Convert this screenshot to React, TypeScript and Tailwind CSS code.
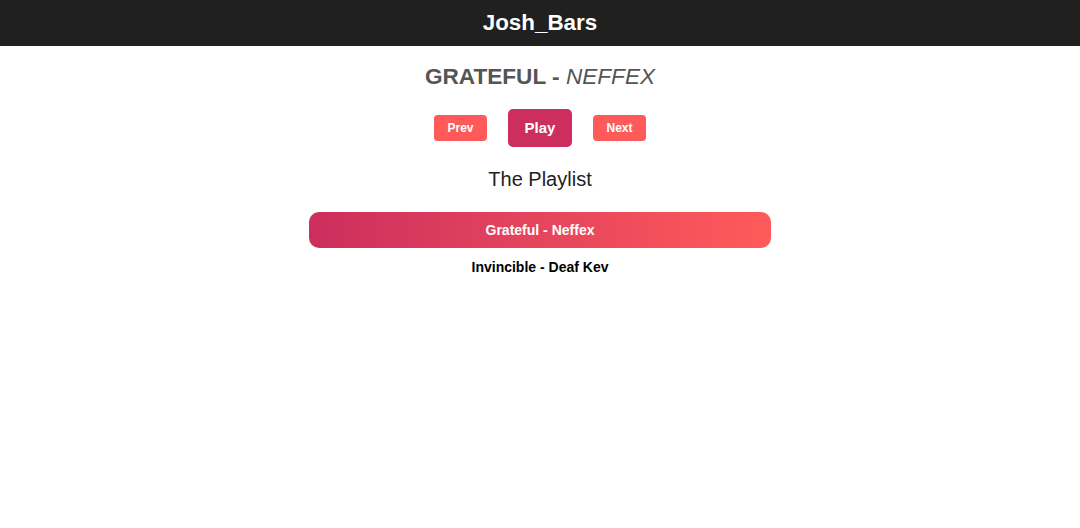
const songs = [
  { title: "Grateful", artist: "Neffex" },
  { title: "Invincible", artist: "Deaf Kev" },
];

export default function App() {
  const current = 0;
  return (
    <div className="min-h-screen bg-white font-['Liberation_Sans',Arial,sans-serif]">
      <header className="h-[46px] bg-[#202020] flex items-center justify-center">
        <h1 className="text-[22.4px] font-bold text-white">Josh_Bars</h1>
      </header>

      <main className="flex flex-col items-center">
        <h2 className="mt-[16px] text-[22.6px] font-bold text-[#555555] leading-[30px]">
          GRATEFUL - <span className="font-normal italic">NEFFEX</span>
        </h2>

        {/* Controls */}
        <div className="mt-[17px] flex items-center gap-[21px]">
          <button className="w-[53px] h-[26px] rounded-[4px] bg-[#ff5a5a] text-white text-[12px] font-bold">
            Prev
          </button>
          <button className="w-[64px] h-[38px] rounded-[5px] bg-[#cc2e5d] text-white text-[15px] font-bold">
            Play
          </button>
          <button className="w-[53px] h-[26px] rounded-[4px] bg-[#ff5a5a] text-white text-[12px] font-bold">
            Next
          </button>
        </div>

        <h3 className="mt-[19px] text-[20px] text-[#222222] leading-[26px]">The Playlist</h3>

        {/* Playlist */}
        <ul className="mt-[20px] w-[462px] flex flex-col">
          {songs.map((s, i) => (
            <li
              key={s.title}
              className={
                i === current
                  ? "h-[36px] rounded-[10px] bg-gradient-to-r from-[#cc2e5d] to-[#ff5a5a] text-white text-[14px] font-bold flex items-center justify-center"
                  : "h-[38px] text-black text-[14px] font-bold flex items-center justify-center"
              }
            >
              {s.title} - {s.artist}
            </li>
          ))}
        </ul>
      </main>
    </div>
  );
}
